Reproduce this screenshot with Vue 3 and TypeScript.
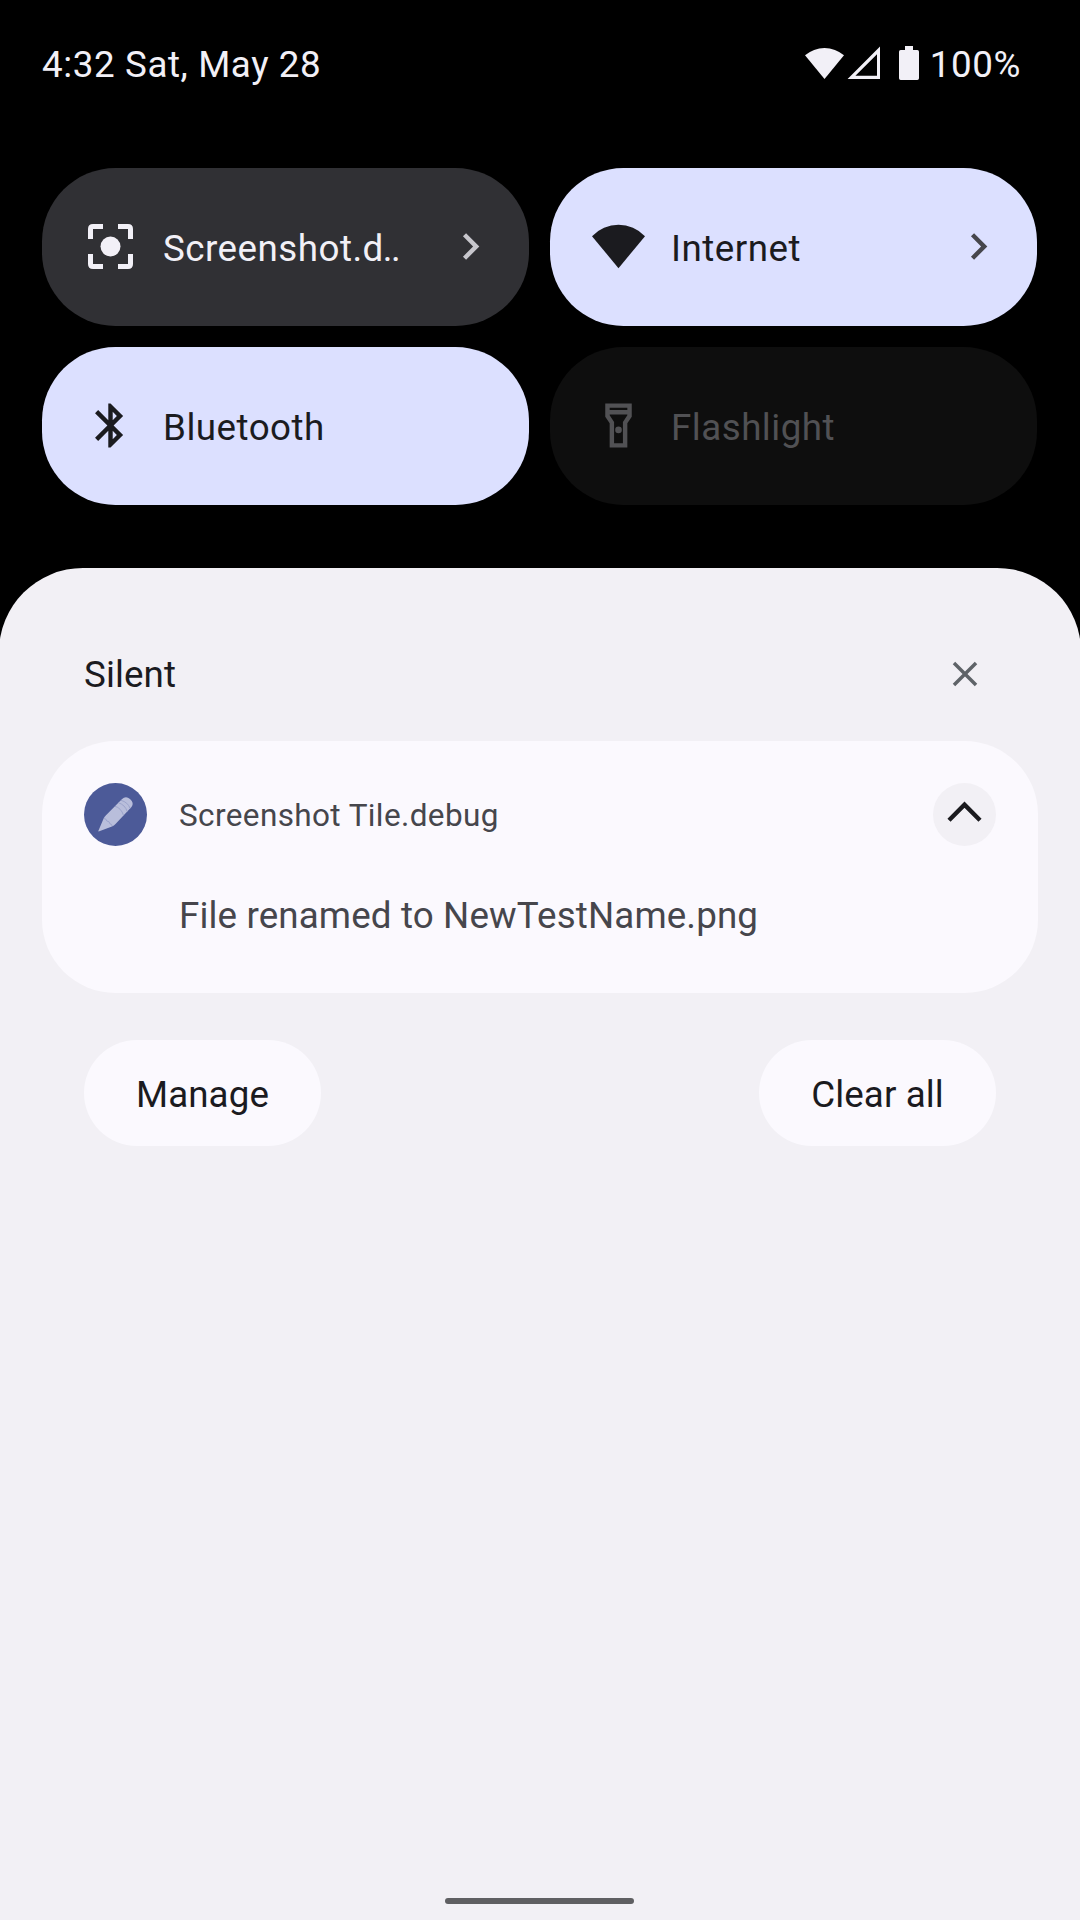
<script setup lang="ts">
interface Tile {
  id: string
  label: string
  ellipsis?: string
  state: 'idle' | 'active' | 'off'
  chevron: boolean
}

const tiles: Tile[] = [
  { id: 'screenshot', label: 'Screenshot.d', ellipsis: '..', state: 'idle', chevron: true },
  { id: 'internet', label: 'Internet', state: 'active', chevron: true },
  { id: 'bluetooth', label: 'Bluetooth', state: 'active', chevron: false },
  { id: 'flashlight', label: 'Flashlight', state: 'off', chevron: false },
]
</script>

<template>
  <div class="shade">
    <header class="status">
      <span class="clock">4:32 Sat, May 28</span>
      <div class="system">
        <svg class="wifi" viewBox="0 0 39 33" width="39" height="33">
          <path d="M19.5 33 0 9.3A30 30 0 0 1 39 9.3Z" fill="currentColor" />
        </svg>
        <svg class="signal" viewBox="0 0 33 33" width="33" height="33">
          <path fill-rule="evenodd" d="M0.6 33H33V.5ZM8.4 29.8H30V8.2Z" fill="currentColor" />
        </svg>
        <svg class="battery" viewBox="0 0 20 34" width="20" height="34">
          <path d="M6 0h8v4h4.3q1.7 0 1.7 1.7v26.6q0 1.7-1.7 1.7H1.7Q0 34 0 32.3V5.7Q0 4 1.7 4H6Z" fill="currentColor" />
        </svg>
        <span class="percent">100%</span>
      </div>
    </header>

    <section class="tiles">
      <div v-for="tile in tiles" :key="tile.id" class="tile" :class="tile.state">
        <svg v-if="tile.id === 'screenshot'" class="icon" viewBox="0 0 53 53">
          <path d="M6.5 19V9Q6.5 6.5 9 6.5H19M34 6.5H44Q46.5 6.5 46.5 9V19M46.5 34V44Q46.5 46.5 44 46.5H34M19 46.5H9Q6.500 46.500 6.500 44V34" fill="none" stroke="currentColor" stroke-width="5" />
          <circle cx="26.5" cy="26.5" r="10" fill="currentColor" />
        </svg>
        <svg v-else-if="tile.id === 'internet'" class="icon" viewBox="0 0 53 53">
          <path d="M26.500 48.200 0 16.200A36.500 36.500 0 0 1 53 16.200Z" fill="currentColor" />
        </svg>
        <svg v-else-if="tile.id === 'bluetooth'" class="icon" viewBox="0 0 24 24">
          <path d="M17.710 7.710 12 2h-1v7.590L6.410 5 5 6.410 10.590 12 5 17.590 6.410 19 11 14.410V22h1l5.710-5.710-4.300-4.290 4.300-4.290zM13 5.830l1.880 1.880L13 9.590V5.830zm1.880 10.460L13 18.170v-3.760l1.880 1.880z" fill="currentColor" />
        </svg>
        <svg v-else class="icon" viewBox="0 0 24 24">
          <path d="M18 2H6v6l2 3v11h8V11l2-3V2zm-2 2v1H8V4h8zm-2 6.400V20h-4v-9.610l-2-3V7h8v.390l-2 3.010z" fill="currentColor" />
          <circle cx="12" cy="14" r="1.500" fill="currentColor" />
        </svg>
        <span class="label">{{ tile.label }}<span v-if="tile.ellipsis" class="ellipsis">{{ tile.ellipsis }}</span></span>
        <svg v-if="tile.chevron" class="chevron" viewBox="0 0 24 24">
          <path d="M8.590 16.590 13.170 12 8.590 7.410 10 6l6 6-6 6z" fill="currentColor" />
        </svg>
      </div>
    </section>

    <main class="sheet">
      <div class="section-head">
        <span class="section-title">Silent</span>
        <svg class="close" viewBox="0 0 24 24" width="42" height="42">
          <path d="M19 6.410 17.590 5 12 10.590 6.410 5 5 6.410 10.590 12 5 17.590 6.410 19 12 13.410 17.590 19 19 17.590 13.410 12z" fill="currentColor" />
        </svg>
      </div>

      <article class="card">
        <div class="card-head">
          <svg class="app" viewBox="0 0 63 63" width="63" height="63">
            <circle cx="31.5" cy="31.5" r="31.5" fill="#4c5a98" />
            <path d="M14.300 48 19.300 36.300Q20.300 34 22 32.300L37.800 16.200Q41.800 12.500 46 16Q50.500 20 47.500 24L31.500 41Q30 42.600 28 43.500L15.300 48.300Q14.200 48.600 14.300 48Z" fill="#b9bedb" />
            <path d="M19.800 35.500q3 .3 3 2.500 3 .2 3 2.700 2.200.3 2.400 2.300M31 23.300q6 1.500 8.500 9M34.500 19.800q6.500 2 8.700 8.700M37 17.300q7 2 9 8" fill="none" stroke="#98a0c8" stroke-width="0.900" />
          </svg>
          <span class="app-name">Screenshot Tile.debug</span>
          <svg class="collapse" viewBox="0 0 63 63" width="63" height="63">
            <circle cx="31.5" cy="31.5" r="31.5" fill="#f2f0f5" />
            <path d="M16 37.200 31.500 21.700 47 37.200" fill="none" stroke="#1b1b1f" stroke-width="4.400" />
          </svg>
        </div>
        <p class="message">File renamed to NewTestName.png</p>
      </article>

      <div class="actions">
        <button type="button">Manage</button>
        <button type="button">Clear all</button>
      </div>

      <div class="handle"></div>
    </main>
  </div>
</template>

<style>
body {
  margin: 0;
  background: #000;
}
</style>

<style scoped>
.shade {
  display: flex;
  flex-direction: column;
  box-sizing: border-box;
  width: 1080px;
  height: 1920px;
  overflow: hidden;
  background: #000;
  color: #1b1b1f;
  font-family: Roboto, "Liberation Sans", sans-serif;
  font-size: 36.75px;
  line-height: 44px;
  white-space: nowrap;
}

.status {
  display: flex;
  justify-content: space-between;
  align-items: center;
  box-sizing: border-box;
  height: 126px;
  padding: 0 59px 0 42px;
  color: #f2f0f7;
}

.clock {
  padding-top: 3px;
  letter-spacing: 0.6px;
}

.system {
  display: flex;
  align-items: center;
}

.wifi,
.signal {
  margin-bottom: 2px;
}

.signal {
  margin-left: 3px;
}

.battery {
  margin-left: 19px;
}

.percent {
  margin-left: 11px;
  padding-top: 3px;
  letter-spacing: 0.6px;
}

.tiles {
  display: grid;
  grid-template-columns: 487px 487px;
  grid-auto-rows: 158px;
  gap: 21px;
  padding: 42px 42px 0;
}

.tile {
  display: flex;
  align-items: center;
  box-sizing: border-box;
  padding: 0 32px 0 42px;
  border-radius: 73.5px;
  letter-spacing: 0.48px;
}

.tile.idle {
  background: #303034;
  color: #f2f0f7;
}

.tile.active {
  background: #dce0ff;
  color: #1b1b1f;
}

.tile.off {
  background: #0e0e0e;
  color: #515154;
}

.icon,
.chevron {
  flex: none;
  width: 53px;
  height: 53px;
  margin-bottom: 1px;
}

.label {
  flex: 1;
  margin-left: 26px;
  padding-top: 3px;
}

.ellipsis {
  margin-left: -1px;
  letter-spacing: -1.4px;
}

.idle .chevron {
  color: #c7c6cc;
}

.active .chevron {
  color: #46464c;
}

.sheet {
  display: flex;
  flex: 1;
  flex-direction: column;
  margin: 63px -1px 0;
  padding: 0 43px;
  border-radius: 84px 84px 0 0;
  background: #f2f0f5;
}

.section-head {
  display: flex;
  justify-content: space-between;
  align-items: center;
  box-sizing: border-box;
  height: 173px;
  padding: 38px 52.5px 0 42px;
}

.section-title {
  padding-top: 2px;
  letter-spacing: 0.1px;
}

.close {
  color: #5f6368;
}

.card {
  box-sizing: border-box;
  height: 252px;
  padding: 42px;
  border-radius: 73.5px;
  background: #fbf9fe;
  color: #46464c;
}

.card-head {
  display: flex;
  align-items: center;
}

.app-name {
  flex: 1;
  margin-left: 32px;
  padding-top: 2px;
  font-size: 31.5px;
  letter-spacing: 0.38px;
}

.message {
  margin: 48px 0 0 95px;
  letter-spacing: 0.13px;
}

.actions {
  display: flex;
  justify-content: space-between;
  padding: 47px 42px 0;
}

.actions button {
  width: 237px;
  height: 106px;
  padding: 3px 0 0;
  border: 0;
  border-radius: 53px;
  background: #fbf9fe;
  color: #1b1b1f;
  font: inherit;
  letter-spacing: 0.1px;
}

.handle {
  width: 189px;
  height: 6px;
  margin: auto auto 16px 403px;
  border-radius: 3px;
  background: #5f5f62;
}
</style>
